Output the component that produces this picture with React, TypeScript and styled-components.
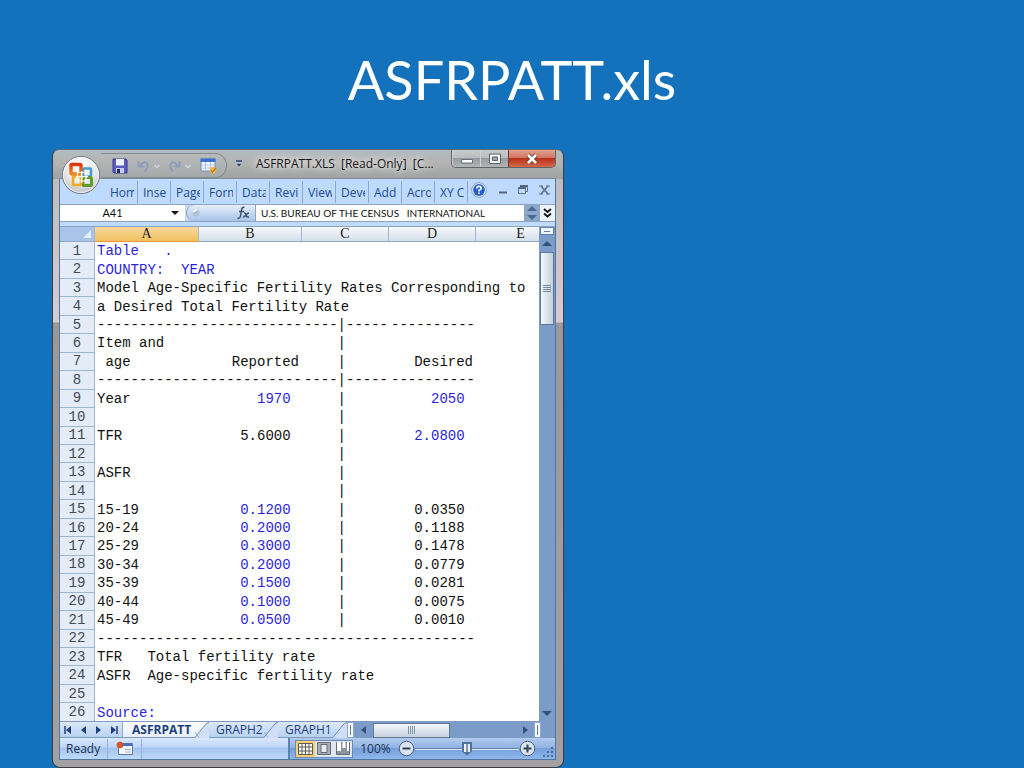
import React from "react";
import styled, { createGlobalStyle } from "styled-components";

const ui = `"Open Sans", "Noto Sans", sans-serif`;
const mono = `"Liberation Mono", "Courier New", monospace`;

const Global = createGlobalStyle`
  * { box-sizing: border-box; }
  body { margin: 0; background: #1471bc; }
  button { font: inherit; color: inherit; background: none; border: 0; padding: 0; }
  svg { display: block; flex: none; }
`;

const Slide = styled.main`
  display: flex;
  flex-direction: column;
  height: 100vh;
  min-height: 700px;
  background: #1471bc;
`;

const Title = styled.h1`
  margin: 0;
  flex: none;
  height: 149px;
  padding-top: 46px;
  text-align: center;
  color: #fff;
  font: 400 54px/68px Lato, "Open Sans", sans-serif;
`;

const Window = styled.section`
  position: relative;
  flex: 1;
  min-height: 0;
  display: flex;
  flex-direction: column;
  width: 50%;
  min-width: 512px;
  margin-left: 52px;
  padding: 0 7px 7px 6px;
  border: 1px solid #3b3d42;
  border-top-color: #5a6a78;
  border-radius: 7px 7px 8px 8px;
  background:
    linear-gradient(180deg, #b3bcc0 0, #b4b4b3 12px, #9fa2a2 29px, transparent 29px),
    linear-gradient(180deg, #b9b9ba 0, #d6ccd4 172px, #9c979b 173px, #a3a0a3 100%);
`;

const TitleBar = styled.header`
  flex: none;
  display: flex;
  height: 28px;
  padding-left: 42px;
`;

const QuickAccess = styled.div`
  display: flex;
  align-items: center;
  height: 25px;
  width: 126px;
  margin-top: 3px;
  padding: 0 9px 0 11px;
  justify-content: space-between;
  border: 1px solid #858b8e;
  border-left: 0;
  border-radius: 0 12px 12px 0;
  background: linear-gradient(#b9bbbb, #a5a8a9);
`;

const IconButton = styled.button`
  display: flex;
  align-items: center;
  justify-content: center;
`;

const QuickMenu = styled(IconButton)`
  width: 24px;
  height: 28px;
`;

const Caption = styled.div`
  flex: 1;
  min-width: 0;
  padding-left: 5px;
  font: 12px/28px ${ui};
  color: #161616;
  white-space: pre;
  overflow: hidden;
  text-shadow: 0 0 6px #e8e8e8, 0 0 6px #e0e0e0, 0 0 8px #ddd;
`;

const WindowControls = styled.div`
  display: flex;
  height: 18px;
  border: 1px solid #5e6468;
  border-top: 0;
  border-radius: 0 0 5px 5px;
  overflow: hidden;
`;

const WindowControl = styled(IconButton)<{ $close?: boolean }>`
  width: ${(p) => (p.$close ? 47 : 28)}px;
  border-left: ${(p) => (p.$close ? "1px solid #6b3a35" : "1px solid #d0d0d0")};
  background: ${(p) =>
    p.$close
      ? "linear-gradient(#e0a494 0, #d3745f 45%, #b93219 50%, #d4694b 100%)"
      : "linear-gradient(#c9cbcb 0, #bbbebe 45%, #969b9e 50%, #b3b6b7 100%)"};
`;

const OfficeButton = styled.button`
  position: absolute;
  left: 8px;
  top: 5px;
  width: 40px;
  height: 40px;
`;

const Client = styled.div`
  flex: 1;
  min-height: 0;
  display: flex;
  flex-direction: column;
  border: 1px solid #52779f;
  border-top-color: #7d8d9c;
  background: #bfdbff;
`;

const Ribbon = styled.nav`
  flex: none;
  display: flex;
  align-items: center;
  height: 25px;
  padding-left: 45px;
  background: #bfdaff;
`;

const RibbonTab = styled.button`
  width: 33px;
  height: 22px;
  padding: 0 3px 0 5px;
  border-right: 1px solid #8fa7cb;
  color: #1d4a8f;
  font: 12px/24px ${ui};
  text-align: left;
  white-space: nowrap;

  span { display: block; overflow: hidden; }
`;

const RibbonTools = styled.div`
  flex: 1;
  display: flex;
  justify-content: space-between;
  align-items: center;
  padding: 0 5px 3px 3px;
`;

const FormulaBar = styled.div`
  flex: none;
  display: flex;
  height: 18px;
  border-top: 1px solid #8fa3bd;
  border-bottom: 1px solid #8fa3bd;
  background: #c3d9f5;
`;

const NameBox = styled.input`
  width: 105px;
  padding: 0;
  border: 0;
  background: #fff;
  color: #111;
  text-align: center;
  font: 11px/16px Lato, sans-serif;
`;

const NameDrop = styled(IconButton)`
  width: 20px;
  background: #fff;
`;

const FunctionArea = styled.div`
  display: flex;
  justify-content: space-between;
  align-items: center;
  width: 70px;
  margin-left: 1px;
  padding: 0 4px 0 5px;
  border: 1px solid #8fa3bd;
  border-width: 0 1px;
  border-radius: 8px 0 0 8px;
  background: linear-gradient(#e6effb, #a9c3e8);
`;

const FormulaInput = styled.input`
  flex: 1;
  min-width: 0;
  border: 0;
  padding: 0 5px;
  background: #fff;
  color: #111;
  white-space: pre;
  font: 10px/16px Lato, sans-serif;
`;

const Spinner = styled(IconButton)`
  width: 16px;
  background: #8ba7cc;
`;

const Expand = styled(IconButton)`
  width: 15px;
  background: #eef4fc;
`;

const Sheet = styled.div`
  flex: 1;
  min-height: 0;
  display: flex;
  margin-top: 4px;
  border-top: 1px solid #8aa6bf;
  background: #fff;
`;

const GridPane = styled.div`
  flex: 1;
  min-width: 0;
  height: 100%;
  overflow: hidden;
`;

const Grid = styled.table`
  width: 100%;
  height: calc(100% + 1px);
  table-layout: fixed;
  border-collapse: separate;
  border-spacing: 0;
  font: 14px/16px ${mono};
  color: #111;
`;

const ColHead = styled.th<{ $active?: boolean }>`
  height: 15px;
  padding: 0;
  border-right: 1px solid #9eb6ce;
  border-bottom: 1px solid ${(p) => (p.$active ? "#f29536" : "#8faac4")};
  background: ${(p) =>
    p.$active ? "linear-gradient(#f9d99f, #f1c15f)" : "linear-gradient(#f6fafb, #d5deea)"};
  color: #222;
  font: 14px/14px "Liberation Serif", serif;
  text-align: center;

  &:last-child { padding-left: 26px; border-right: 0; }
`;

const Corner = styled.td`
  padding: 0 3px 0 0;
  border-right: 1px solid #9eb6ce;
  border-bottom: 1px solid #8faac4;
  background: #a9c4e9;

  svg { margin-left: auto; }
`;

const RowHead = styled.th`
  padding: 0;
  border-right: 1px solid #9eb6ce;
  border-bottom: 1px solid #9eb6ce;
  background: #e4ecf7;
  color: #424a55;
  font: 14px/16px ${mono};
  text-align: center;
`;

const Cell = styled.td<{ $blue?: boolean; $right?: boolean }>`
  padding: 0 3px 0 2px;
  color: ${(p) => (p.$blue ? "#2b1fe0" : "#111")};
  white-space: pre;
  text-align: ${(p) => (p.$right ? "right" : "left")};
`;

const VScroll = styled.div`
  display: flex;
  flex-direction: column;
  align-items: center;
  width: 16px;
  padding: 0 1px;
  background: #7b9bc8;
`;

const SplitHandle = styled.div`
  width: 14px;
  height: 8px;
  padding: 3px 3px;
  border: 1px solid #5f85b4;
  background: #eef5fd;

  &::before { content: ""; display: block; height: 1px; background: #6b7f99; }
`;

const ScrollArrow = styled(IconButton)`
  width: 14px;
  height: 17px;
`;

const VThumb = styled.div`
  display: flex;
  align-items: center;
  justify-content: center;
  width: 14px;
  height: 73px;
  border: 1px solid #5f7799;
  background: linear-gradient(90deg, #f6f9fb, #c3d0da);
`;

const Fill = styled.div`
  flex: 1;
`;

const SheetBar = styled.div`
  flex: none;
  display: flex;
  height: 17px;
  border-top: 1px solid #7f9cc0;
  background: #7b9bc8;
`;

const TabStrip = styled.div`
  display: flex;
  width: 287px;
  background: linear-gradient(#dbe8f9, #b9d2f2);
  border-bottom: 1px solid #7f9cc0;
`;

const NavButtons = styled.div`
  display: flex;
  align-items: center;
  justify-content: space-between;
  width: 63px;
  padding: 0 4px;
  border-right: 1px solid #8fa9cc;
`;

const SheetTab = styled.button<{ $active?: boolean }>`
  display: flex;
  align-items: center;
  justify-content: space-between;
  width: ${(p) => (p.$active ? 86 : 69)}px;
  padding-left: ${(p) => (p.$active ? 9 : 7)}px;
  background: ${(p) => (p.$active ? "linear-gradient(#fff, #e3eefb)" : "transparent")};
  color: #1d3f7c;
  font: ${(p) => (p.$active ? 700 : 400)} 12px/16px ${ui};
`;

const Divider = styled.div`
  width: 7px;
  padding: 2px 2px;
  border: 1px solid #8fa9cc;
  background: #f5f9fe;

  &::before { content: ""; display: block; width: 1px; height: 10px; background: #69809d; }
`;

const HScroll = styled.div`
  flex: 1;
  display: flex;
  align-items: center;
`;

const HArrow = styled(IconButton)`
  width: 19px;
  height: 16px;
`;

const HThumb = styled.div`
  display: flex;
  align-items: center;
  justify-content: center;
  width: 77px;
  height: 15px;
  border: 1px solid #5f7799;
  background: linear-gradient(#f4f7fa, #c5d2e0);
`;

const StatusBar = styled.footer`
  flex: none;
  display: flex;
  align-items: center;
  height: 21px;
  background: linear-gradient(#dae8fb 0, #c0d8f7 40%, #a5c4ee 50%, #bfdaf9 100%);
  color: #20314f;
  font: 12px/21px ${ui};
`;

const StatusItem = styled.div`
  display: flex;
  align-items: center;
  height: 20px;
  padding: 0 7px 0 6px;
  border-right: 1px solid #93b0d6;
`;

const ZoomArea = styled.div`
  display: flex;
  align-items: center;
  height: 21px;
  margin-left: auto;
  padding-left: 5px;
  border-left: 2px solid #5f83b4;
  background: linear-gradient(#b2cbee 0, #92b4e4 45%, #769ed8 50%, #8fb8ee 100%);
`;

const ViewGroup = styled.div`
  display: flex;
  width: 58px;
  height: 18px;
  border: 1px solid #6d8ab4;
  background: #dfe7f2;
`;

const ViewButton = styled(IconButton)<{ $active?: boolean }>`
  flex: 1;
  background: ${(p) => (p.$active ? "#f9cf76" : "transparent")};
`;

const ZoomLabel = styled.button`
  width: 45px;
  text-align: center;
`;

const ZoomRange = styled.input`
  appearance: none;
  width: 104px;
  height: 16px;
  margin: 0;
  background: linear-gradient(transparent 7px, #6380aa 7px, #6380aa 8px, #dce9fa 8px, #dce9fa 9px, transparent 9px);

  &::-webkit-slider-thumb {
    appearance: none;
    width: 10px;
    height: 14px;
    clip-path: polygon(0 0, 100% 0, 100% 70%, 50% 100%, 0 70%);
    border: 2px solid #566f96;
    border-bottom-width: 4px;
    background: linear-gradient(90deg, #eef3fa 2px, #7d93b3 2px, #7d93b3 4px, #e5edf7 4px);
  }
`;

type Direction = "up" | "down" | "left" | "right";
const arrowPaths: Record<Direction, string> = {
  up: "M0 6 5 1l5 5z",
  down: "M0 2h10L5 7z",
  left: "M7 0v8L2 4z",
  right: "M3 0v8l5-4z",
};
const Arrow = ({ dir, color = "#35507c", bar }: { dir: Direction; color?: string; bar?: boolean }) => (
  <svg width="10" height="8" viewBox="0 0 10 8">
    <path d={arrowPaths[dir]} fill={color} />
    {bar && <path d={dir === "left" ? "M1 0v8" : "M9 0v8"} stroke={color} strokeWidth="1.5" />}
  </svg>
);

const ZoomStep = ({ plus }: { plus?: boolean }) => (
  <svg width="17" height="17" viewBox="0 0 17 17">
    <circle cx="8.5" cy="8.5" r="7.2" fill="#dbe5f2" stroke="#4d5f7c" />
    <path d={plus ? "M4.5 8.5h8M8.5 4.5v8" : "M4.5 8.5h8"} stroke="#344259" strokeWidth="2" />
  </svg>
);

const OfficeLogo = () => (
  <svg width="40" height="40" viewBox="0 0 40 40">
    <defs>
      <radialGradient id="orb" cx="50%" cy="30%" r="75%">
        <stop offset="0" stopColor="#ffffff" />
        <stop offset=".55" stopColor="#e8e9eb" />
        <stop offset="1" stopColor="#b4b8bf" />
      </radialGradient>
      <linearGradient id="flame" x1="0" y1="0" x2="0" y2="1">
        <stop offset="0" stopColor="#d8380f" />
        <stop offset="1" stopColor="#f0881c" />
      </linearGradient>
    </defs>
    <circle cx="20" cy="20" r="18.6" fill="url(#orb)" stroke="#757a80" />
    <circle cx="20" cy="20" r="17.4" fill="none" stroke="#fff" opacity=".8" />
    <g fill="none" strokeLinejoin="round">
      <rect x="22" y="13.500" width="8" height="8" rx="1" stroke="#4a9ad6" strokeWidth="2.600" />
      <rect x="22" y="22.500" width="8.500" height="8" rx="1" stroke="#5c9d2c" strokeWidth="3" />
      <rect x="12" y="21.500" width="8" height="8.500" rx="1" stroke="#f3ab1d" strokeWidth="2.600" />
      <rect x="10" y="9.500" width="10" height="9.500" rx="1" stroke="url(#flame)" strokeWidth="3.400" />
    </g>
    <g fill="none" stroke="#fff" strokeWidth="1.200">
      <path d="M16.500 17.500h8.500v8.500h-8.500zM20.700 16v12M15 21.700h12" />
    </g>
  </svg>
);

const SaveIcon = () => (
  <svg width="16" height="16" viewBox="0 0 16 16">
    <path d="M1 1h13l1 1v13H2l-1-1z" fill="#5a5abf" stroke="#37388c" />
    <path d="M4 1h8v6.500H4z" fill="#eef1fb" />
    <path d="M4 10h8v5H4z" fill="#c9cfe9" />
    <path d="M5 11h3v4H5z" fill="#26276b" />
  </svg>
);

const UndoIcon = ({ flip }: { flip?: boolean }) => (
  <svg width="23" height="14" viewBox="0 0 23 14">
    <g fill="none" stroke="#8b9dba">
      <path
        d={flip ? "M5 12.500Q1 8 3 4.500T10 6.500M11.500 2v5.500H6.500" : "M7.500 12.500Q12 8 10 4.500T3 6.500M1.500 2v5.500h5"}
        strokeWidth="1.900"
      />
      <path d="m17.500 6 2.500 2.500L22.500 6" stroke="#d3d7da" strokeWidth="1.500" />
    </g>
  </svg>
);

const TableIcon = () => (
  <svg width="17" height="16" viewBox="0 0 17 16">
    <path d="M1 1h14v12H1z" fill="#f4f8ff" stroke="#6a87c2" />
    <path d="M.5.5h15V4H.5z" fill="#3f6fce" />
    <path d="M1 7h14M1 10h14M5.500 4v9M10.500 4v9" stroke="#b4c6e6" />
    <circle cx="13" cy="12" r="3.200" fill="#efb84c" />
    <path d="m11 12.500 1.500 1.500 3.500-4" fill="none" stroke="#b07a1e" strokeWidth="1.200" />
  </svg>
);

type Value = string | { t: string; blue?: boolean; right?: boolean };
const num = (t: string, blue = false): Value => ({ t: t + " ", blue, right: true });
const bar = "    |";
const rule: Value[] = ["------------", "------------", "----|-----", "----------"];
const rates: [string, string, string][] = [
  ["15-19", "0.1200", "0.0350"],
  ["20-24", "0.2000", "0.1188"],
  ["25-29", "0.3000", "0.1478"],
  ["30-34", "0.2000", "0.0779"],
  ["35-39", "0.1500", "0.0281"],
  ["40-44", "0.1000", "0.0075"],
  ["45-49", "0.0500", "0.0010"],
];
const rows: Value[][] = [
  [{ t: "Table   .", blue: true }],
  [{ t: "COUNTRY:  YEAR", blue: true }],
  ["Model Age-Specific Fertility Rates Corresponding to"],
  ["a Desired Total Fertility Rate"],
  rule,
  ["Item and", "", bar],
  [" age", { t: "Reported", right: true }, bar, { t: "Desired", right: true }],
  rule,
  ["Year", num("1970", true), bar, num("2050", true)],
  ["", "", bar],
  ["TFR", num("5.6000"), bar, num("2.0800", true)],
  ["", "", bar],
  ["ASFR", "", bar],
  ["", "", bar],
  ...rates.map(([age, reported, desired]) => [age, num(reported, true), bar, num(desired)]),
  ["------------", "------------", "----------", "----------"],
  ["TFR   Total fertility rate"],
  ["ASFR  Age-specific fertility rate"],
  [""],
  [{ t: "Source:", blue: true }],
];

const ribbonTabs = ["Hom", "Inse", "Page", "Form", "Data", "Revi", "View", "Deve", "Add", "Acro", "XY C"];

export default function App() {
  return (
    <Slide>
      <Global />
      <Title>ASFRPATT.xls</Title>
      <Window aria-label="ASFRPATT.XLS">
        <TitleBar>
          <QuickAccess>
            <IconButton aria-label="Save"><SaveIcon /></IconButton>
            <IconButton aria-label="Undo"><UndoIcon /></IconButton>
            <IconButton aria-label="Redo"><UndoIcon flip /></IconButton>
            <IconButton aria-label="Table"><TableIcon /></IconButton>
          </QuickAccess>
          <QuickMenu aria-label="Customize toolbar">
            <svg width="8" height="8" viewBox="0 0 8 8">
              <path d="M1 1h6" stroke="#274675" strokeWidth="1.500" />
              <path d="M1 3.500h6L4 7z" fill="#274675" stroke="#e8edf4" strokeWidth=".4" />
            </svg>
          </QuickMenu>
          <Caption>{"ASFRPATT.XLS  [Read-Only]  [C..."}</Caption>
          <WindowControls>
            <WindowControl aria-label="Minimize">
              <svg width="14" height="12" viewBox="0 0 14 12">
                <path d="M1.500 6.500h11v3.500h-11z" fill="#fff" stroke="#6a7075" />
              </svg>
            </WindowControl>
            <WindowControl aria-label="Maximize">
              <svg width="14" height="12" viewBox="0 0 14 12">
                <path d="M1.500 1h11v9.500h-11z" fill="#f4f4f4" stroke="#5b6166" />
                <path d="M4.500 4h5v3.500h-5z" fill="#a3a8ab" stroke="#5b6166" />
              </svg>
            </WindowControl>
            <WindowControl $close aria-label="Close">
              <svg width="14" height="12" viewBox="0 0 14 12">
                <path d="m3 2 8 8M11 2l-8 8" stroke="#5b3531" strokeWidth="4.200" />
                <path d="m3 2 8 8M11 2l-8 8" stroke="#fff" strokeWidth="2.600" />
              </svg>
            </WindowControl>
          </WindowControls>
        </TitleBar>

        <Client>
          <Ribbon>
            {ribbonTabs.map((t) => (
              <RibbonTab key={t}><span>{t}</span></RibbonTab>
            ))}
            <RibbonTools>
              <IconButton aria-label="Help">
                <svg width="16" height="16" viewBox="0 0 16 16">
                  <circle cx="8" cy="8" r="7.300" fill="#eef4fd" stroke="#6f8fc4" strokeWidth=".8" />
                  <circle cx="8" cy="8" r="5.900" fill="#2460d4" />
                  <path d="M5.800 6.500Q5.800 4.300 8 4.300t2.200 2Q10.200 7.500 8 8.400v1M8 10.500V12" fill="none" stroke="#fff" strokeWidth="1.700" />
                </svg>
              </IconButton>
              <IconButton aria-label="Minimize workbook">
                <svg width="10" height="10" viewBox="0 0 10 10"><path d="M1 7.500h8" stroke="#56677f" strokeWidth="2" /></svg>
              </IconButton>
              <IconButton aria-label="Restore workbook">
                <svg width="10" height="10" viewBox="0 0 10 10">
                  <path d="M.5 3v5.500h7V3M7.500 6.500h2v-5h-7" fill="none" stroke="#65758c" />
                  <path d="M0 3h8M2 1h8" stroke="#56677f" strokeWidth="1.800" />
                </svg>
              </IconButton>
              <IconButton aria-label="Close workbook">
                <svg width="11" height="10" viewBox="0 0 11 10">
                  <path d="m2 1 7 8M9 1 2 9" stroke="#66758a" strokeWidth="1.800" />
                  <path d="M0 1h4M7 1h4M0 9h4M7 9h4" stroke="#66758a" />
                </svg>
              </IconButton>
            </RibbonTools>
          </Ribbon>

          <FormulaBar>
            <NameBox aria-label="Name box" defaultValue="A41" />
            <NameDrop aria-label="Name list">
              <svg width="8" height="6" viewBox="0 0 8 6"><path d="M0 1h8L4 5z" fill="#111" /></svg>
            </NameDrop>
            <FunctionArea>
              <svg width="9" height="10" viewBox="0 0 9 10">
                <circle cx="4" cy="5" r="3.500" fill="#b4c1d3" />
                <path d="M1.500 4q1-2.500 3.500-2" fill="none" stroke="#fff" strokeWidth="1.500" />
              </svg>
              <svg width="15" height="14" viewBox="0 0 15 14">
                <path d="M8.500 1.500Q6 .5 5.500 4L4.500 10Q4 13 1.500 12M3 5.500h5" fill="none" stroke="#3f5372" strokeWidth="1.500" />
                <path d="M8 7q1.500-.5 2 2t3 2M13 7q-1.500 0-3 2t-3 2" fill="none" stroke="#3f5372" strokeWidth="1.400" />
              </svg>
            </FunctionArea>
            <FormulaInput aria-label="Formula" defaultValue="U.S. BUREAU OF THE CENSUS   INTERNATIONAL" />
            <Spinner aria-label="Scroll formula">
              <svg width="10" height="14" viewBox="0 0 10 14"><path d="M0 5l5-5 5 5zM0 9h10l-5 5z" fill="#4a678f" /></svg>
            </Spinner>
            <Expand aria-label="Expand formula bar">
              <svg width="9" height="10" viewBox="0 0 9 10">
                <path d="m1 1 3.500 3L8 1M1 5.500l3.500 3 3.500-3" fill="none" stroke="#111" strokeWidth="1.800" />
              </svg>
            </Expand>
          </FormulaBar>

          <Sheet>
            <GridPane>
              <Grid>
                <colgroup>
                  <col style={{ width: 35 }} />
                  <col style={{ width: 104 }} />
                  <col style={{ width: 103 }} />
                  <col style={{ width: 87 }} />
                  <col style={{ width: 87 }} />
                  <col />
                </colgroup>
                <thead>
                  <tr>
                    <Corner>
                      <svg width="8" height="8" viewBox="0 0 8 8"><path d="M8 0v8H0z" fill="#e3edf9" /></svg>
                    </Corner>
                    {["A", "B", "C", "D", "E"].map((c) => (
                      <ColHead key={c} scope="col" $active={c === "A"}>{c}</ColHead>
                    ))}
                  </tr>
                </thead>
                <tbody>
                  {rows.map((row, i) => (
                    <tr key={i}>
                      <RowHead scope="row">{i + 1}</RowHead>
                      {[0, 1, 2, 3, 4].map((c) => {
                        const v = row[c] ?? "";
                        const cell = typeof v === "string" ? { t: v } : v;
                        return (
                          <Cell key={c} $blue={cell.blue} $right={cell.right}>{cell.t}</Cell>
                        );
                      })}
                    </tr>
                  ))}
                </tbody>
              </Grid>
            </GridPane>
            <VScroll>
              <SplitHandle />
              <ScrollArrow aria-label="Scroll up"><Arrow dir="up" /></ScrollArrow>
              <VThumb>
                <svg width="8" height="8" viewBox="0 0 8 8"><path d="M0 .5h8M0 2.500h8M0 4.500h8M0 6.500h8" stroke="#75879c" /></svg>
              </VThumb>
              <Fill />
              <ScrollArrow aria-label="Scroll down"><Arrow dir="down" /></ScrollArrow>
            </VScroll>
          </Sheet>

          <SheetBar>
            <TabStrip>
              <NavButtons>
                <IconButton aria-label="First sheet"><Arrow dir="left" bar color="#1d3f7c" /></IconButton>
                <IconButton aria-label="Previous sheet"><Arrow dir="left" color="#1d3f7c" /></IconButton>
                <IconButton aria-label="Next sheet"><Arrow dir="right" color="#1d3f7c" /></IconButton>
                <IconButton aria-label="Last sheet"><Arrow dir="right" bar color="#1d3f7c" /></IconButton>
              </NavButtons>
              {["ASFRPATT", "GRAPH2", "GRAPH1"].map((t, i) => (
                <SheetTab key={t} $active={i === 0}>
                  {t}
                  <svg width="14" height="16" viewBox="0 0 14 16">
                    <path d="M14 0v16H0L10 3Q12 0 14 0z" fill="#cfe0f6" />
                    <path d="M0 15.500 10 3Q12 .5 14 .5" fill="none" stroke="#7590b5" />
                    {i < 2 && <path d="m0 10 4 5.500" stroke="#9db3d1" />}
                  </svg>
                </SheetTab>
              ))}
            </TabStrip>
            <Divider />
            <HScroll>
              <HArrow aria-label="Scroll left"><Arrow dir="left" /></HArrow>
              <HThumb>
                <svg width="8" height="8" viewBox="0 0 8 8"><path d="M.5 0v8M2.500 0v8M4.500 0v8M6.500 0v8" stroke="#8796a8" /></svg>
              </HThumb>
              <Fill />
              <HArrow aria-label="Scroll right"><Arrow dir="right" /></HArrow>
            </HScroll>
            <Divider />
            <ScrollArrow as="div" />
          </SheetBar>

          <StatusBar>
            <StatusItem>Ready</StatusItem>
            <StatusItem>
              <svg width="20" height="16" viewBox="0 0 20 16">
                <path d="M4.500 2.500h14v11h-14z" fill="#f3f6fb" stroke="#5d79a8" />
                <path d="M5 2h13v3H5z" fill="#4a70b8" />
                <path d="M11 8.500h6M11 11h6" stroke="#9fb2d2" />
                <circle cx="6" cy="4" r="3.300" fill="#d9532c" />
              </svg>
            </StatusItem>
            <ZoomArea>
              <ViewGroup>
                <ViewButton $active aria-label="Normal view">
                  <svg width="15" height="12" viewBox="0 0 15 12">
                    <path d="M.5.5h14v11H.5zM.5 4h14M.5 8h14M4 .5v11M7.500.5v11M11 .5v11" fill="#fff" stroke="#5b5a55" />
                  </svg>
                </ViewButton>
                <ViewButton aria-label="Page layout view">
                  <svg width="14" height="13" viewBox="0 0 14 13">
                    <path d="M.5.5h13v12H.5z" fill="#a9adb5" stroke="#666d79" />
                    <path d="M4 2.500h6v8H4z" fill="#e8ebf0" stroke="#666d79" />
                  </svg>
                </ViewButton>
                <ViewButton aria-label="Page break view">
                  <svg width="14" height="13" viewBox="0 0 14 13">
                    <path d="M.5.5h13v12H.5z" fill="#8e949e" stroke="#666d79" />
                    <path d="M1 0h4v9H1zM6.500 0h3v6h-3zM11 0h2v9h-2z" fill="#fff" />
                  </svg>
                </ViewButton>
              </ViewGroup>
              <ZoomLabel>100%</ZoomLabel>
              <IconButton aria-label="Zoom out"><ZoomStep /></IconButton>
              <ZoomRange type="range" aria-label="Zoom" min={0} max={100} defaultValue={50} />
              <IconButton aria-label="Zoom in"><ZoomStep plus /></IconButton>
              <svg width="19" height="20" viewBox="0 0 19 20">
                <path d="M15 8h2v2h-2zM15 12h2v2h-2zM11 12h2v2h-2zM15 16h2v2h-2zM11 16h2v2h-2zM7 16h2v2H7z" fill="#456ba5" />
              </svg>
            </ZoomArea>
          </StatusBar>
        </Client>
        <OfficeButton aria-label="Office menu"><OfficeLogo /></OfficeButton>
      </Window>
    </Slide>
  );
}
